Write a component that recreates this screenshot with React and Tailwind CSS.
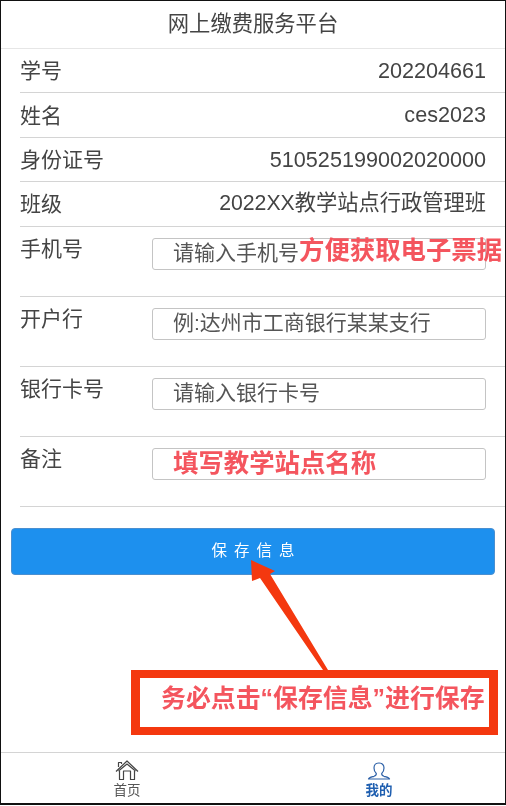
const cjk = "font-['Liberation_Sans','Noto_Sans_CJK_SC',sans-serif]";

const infoRows = [
  ['学号', '202204661', 'text-[21.600px]'],
  ['姓名', 'ces2023', 'text-[21.600px]'],
  ['身份证号', '510525199002020000', 'text-[21.600px]'],
  ['班级', '2022XX教学站点行政管理班', 'text-[21.260px]'],
];

const formRows = [
  { label: '手机号', placeholder: '请输入手机号', hint: '方便获取电子票据' },
  { label: '开户行', placeholder: '例:达州市工商银行某某支行' },
  { label: '银行卡号', placeholder: '请输入银行卡号' },
  { label: '备注', note: '填写教学站点名称' },
];

function HomeIcon() {
  return (
    <svg width="24" height="21" viewBox="0 0 24 21" fill="none" stroke="#444" strokeWidth="1.2" strokeLinejoin="round">
      <path d="M1 11.500 12 1l11 10.500" />
      <path d="M3.500 7V2.500h3V4" />
      <path d="M3.500 11 12 4l8.500 7" />
      <path d="M4.500 11v8.500h4V11h7v8.500h4V11" />
    </svg>
  );
}

function UserIcon() {
  return (
    <svg width="24" height="18" viewBox="0 0 24 18" fill="none" stroke="#2f62a8" strokeWidth="1.2" strokeLinejoin="round">
      <path d="M12 1C8.500 1 7 3.500 7 6c0 2.500 1.200 4.500 2.300 5.500.2 1.500-.6 2.200-2.300 2.800-2.500.7-5 1-5.500 2.700h21c-.5-1.700-3-2-5.500-2.700-1.700-.6-2.500-1.300-2.300-2.800C15.800 10.500 17 8.500 17 6c0-2.500-1.500-5-5-5Z" />
    </svg>
  );
}

export default function App() {
  return (
    <div className={`relative h-[806px] w-[506px] overflow-hidden bg-white pb-[1px] blur-[0.3px] ${cjk}`}>
      <div className="flex h-[805px] flex-col border border-b-2 border-[#111] text-[#444]">
        <header className="flex h-[48px] shrink-0 items-center justify-center border-b border-[#e6e6e6] pt-[1px] text-[21.300px] leading-none">
          网上缴费服务平台
        </header>

        <div className="pl-[19px]">
          {infoRows.map(([label, value, size]) => (
            <div key={label} className="flex h-[44.4px] items-center justify-between border-b border-[#d4d4d4] pr-[19px] text-[21px] leading-none">
              <span>{label}</span>
              <span className={size}>{value}</span>
            </div>
          ))}

          {formRows.map(row => (
            <div key={row.label} className="flex h-[70px] border-b border-[#d4d4d4] pr-[19px] pt-[11px]">
              <span className="w-[132px] shrink-0 text-[21px] leading-[22px]">{row.label}</span>
              <div className="flex h-[32px] min-w-0 flex-1 items-center whitespace-nowrap rounded-[3px] border border-[#c4c4c4] pl-[20px] text-[21px] leading-none text-[#555]">
                {row.placeholder && <span className="pb-[2px]">{row.placeholder}</span>}
                {row.hint && <span className="pb-[5px] text-[25.400px] font-bold text-[#f4555e]">{row.hint}</span>}
                {row.note && <span className="pt-[1px] text-[25.400px] font-bold text-[#f4555e]">{row.note}</span>}
              </div>
            </div>
          ))}
        </div>

        <div className="mt-[21px] px-[10px]">
          <button className="flex h-[47px] w-full items-center justify-center rounded-[4px] border border-[#4a8fd0] bg-[#1d90ee] pl-[7px] text-[15.500px] tracking-[7px] text-white">
            保存信息
          </button>
        </div>

        <nav className="mt-auto flex h-[51px] shrink-0 border-t border-[#d4d4d4]">
          <div className="flex w-[252px] flex-col items-center pt-[7px]">
            <HomeIcon />
            <span className="mt-[2px] text-[13.500px] leading-[16px] text-[#555]">首页</span>
          </div>
          <div className="flex flex-1 flex-col items-center pt-[9px]">
            <UserIcon />
            <span className="mt-[3px] text-[13.500px] font-bold leading-[16px] text-[#1f5fb0]">我的</span>
          </div>
        </nav>
      </div>

      <svg className="absolute left-[245px] top-[555px]" width="90" height="120" viewBox="0 0 90 120">
        <path d="M6 5 30 16 25 19 83 115 78 115 15 23 7 26Z" fill="#f4380f" />
      </svg>

      <div className="absolute left-[131px] top-[670px] flex h-[65px] w-[367px] items-center whitespace-nowrap border-x-[9px] border-t-[8px] border-b-[8px] border-[#f4380f] bg-white pb-[8px] pl-[21px] text-[24.900px] font-bold leading-none text-[#f4555e]">
        务必点击“保存信息”进行保存
      </div>
    </div>
  );
}
